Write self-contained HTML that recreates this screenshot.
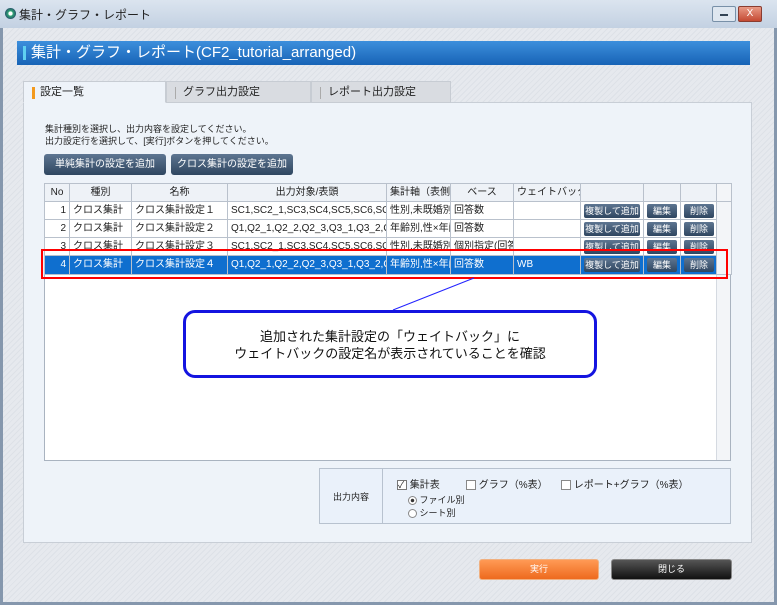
<!DOCTYPE html>
<html><head><meta charset="utf-8"><style>
*{margin:0;padding:0;box-sizing:border-box}
body{width:777px;height:605px;overflow:hidden;font-family:"Liberation Sans","Noto Sans CJK JP",sans-serif;font-size:10px;color:#222;position:relative;background:#8597ad}
.a{position:absolute}
.win{left:3px;top:0;width:771px;height:602px;background:#e4e8ee;background-image:repeating-linear-gradient(135deg,#e6e9ee 0 3px,#dde1e7 3px 4px)}
.tb{left:0;top:0;width:777px;height:28px;background:linear-gradient(#dbe4ef,#c3d1e2);font-size:12px}
.hdr{left:17px;top:41px;width:733px;height:24px;background:linear-gradient(#3d8fdc,#1763b6);color:#fff;font-size:15px;line-height:24px;padding-left:14px}
.tab{top:81px;height:22px;background:#d9dce1;border:1px solid #c7ccd3;font-size:11px;line-height:20px;padding-left:16px}
.panel{left:23px;top:102px;width:729px;height:441px;background:#eef3f9;border:1px solid #c8ced6}
.btn{background:linear-gradient(#5d7591,#2f4660);color:#fff;border-radius:3px;text-align:center}
table{border-collapse:collapse;table-layout:fixed}
td{border:1px solid #b9c1cc;height:18px;line-height:16px;padding:0 3px;white-space:nowrap;overflow:hidden;font-size:10px}
.sb{font-size:9px;line-height:14px;height:14px;margin:0 auto;border-radius:2px}
</style></head><body>
<div class="a win"></div>
<div class="a tb"><span class="a" style="left:5px;top:8px;width:11px;height:11px;border-radius:50%;background:radial-gradient(#fff 25%,#3a7 30%,#246 80%)"></span><span class="a" style="left:19px;top:6px">集計・グラフ・レポート</span>
<span class="a" style="left:712px;top:6px;width:24px;height:16px;border:1px solid #7890a8;background:#dfe7f0;border-radius:2px"></span><span class="a" style="left:720px;top:14px;width:8px;height:2px;background:#345"></span>
<span class="a" style="left:738px;top:6px;width:24px;height:16px;border:1px solid #8a3c30;background:linear-gradient(#e99a86,#c44a33);border-radius:2px;color:#fff;font-size:10px;text-align:center;line-height:14px">X</span></div>
<div class="a hdr"><span class="a" style="left:6px;top:5px;width:3px;height:14px;background:#5fd0f0"></span>集計・グラフ・レポート(CF2_tutorial_arranged)</div>
<div class="a panel"></div>
<div class="a tab" style="left:23px;width:143px;background:#eef3f9;border-bottom-color:#eef3f9"><span class="a" style="left:8px;top:5px;width:3px;height:12px;background:#f39a1e"></span>設定一覧</div>
<div class="a tab" style="left:166px;width:145px"><span class="a" style="left:8px;top:5px;width:1px;height:12px;background:#aaa"></span>グラフ出力設定</div>
<div class="a tab" style="left:311px;width:140px"><span class="a" style="left:8px;top:5px;width:1px;height:12px;background:#aaa"></span>レポート出力設定</div>
<div class="a" style="left:45px;top:123px;font-size:9px;line-height:12px">集計種別を選択し、出力内容を設定してください。<br>出力設定行を選択して、[実行]ボタンを押してください。</div>
<div class="a btn" style="left:44px;top:154px;width:122px;height:21px;line-height:21px">単純集計の設定を追加</div>
<div class="a btn" style="left:171px;top:154px;width:122px;height:21px;line-height:21px">クロス集計の設定を追加</div>
<div class="a" style="left:44px;top:183px;width:687px;height:278px;background:#fff;border:1px solid #a9b3c0"></div>
<div class="a" style="left:716px;top:201px;width:14px;height:259px;background:#f3f5f8;border-left:1px solid #d5dae1"></div>
<table class="a" style="left:44px;top:183px;width:687px">
<colgroup><col style="width:25px"><col style="width:62px"><col style="width:96px"><col style="width:159px"><col style="width:64px"><col style="width:63px"><col style="width:67px"><col style="width:63px"><col style="width:37px"><col style="width:36px"><col style="width:15px"></colgroup>
<tr style="background:#eef2f7;text-align:center"><td>No</td><td>種別</td><td>名称</td><td>出力対象/表頭</td><td style="text-align:left">集計軸（表側）</td><td>ベース</td><td style="text-align:left">ウェイトバック</td><td></td><td></td><td></td><td style="background:#f3f5f8"></td></tr>
<tr><td style="text-align:right">1</td><td>クロス集計</td><td>クロス集計設定１</td><td>SC1,SC2_1,SC3,SC4,SC5,SC6,SC7,SC</td><td>性別,未既婚別</td><td>回答数</td><td></td><td><div class="btn sb" style="width:56px">複製して追加</div></td><td><div class="btn sb" style="width:30px">編集</div></td><td><div class="btn sb" style="width:30px">削除</div></td><td rowspan="4" style="background:#f3f5f8;vertical-align:top"></td></tr>
<tr><td style="text-align:right">2</td><td>クロス集計</td><td>クロス集計設定２</td><td>Q1,Q2_1,Q2_2,Q2_3,Q3_1,Q3_2,Q3</td><td>年齢別,性×年齢</td><td>回答数</td><td></td><td><div class="btn sb" style="width:56px">複製して追加</div></td><td><div class="btn sb" style="width:30px">編集</div></td><td><div class="btn sb" style="width:30px">削除</div></td></tr>
<tr><td style="text-align:right;height:16px">3</td><td>クロス集計</td><td>クロス集計設定３</td><td>SC1,SC2_1,SC3,SC4,SC5,SC6,SC7,SC</td><td>性別,未既婚別</td><td>個別指定(回答</td><td></td><td><div class="btn sb" style="width:56px">複製して追加</div></td><td><div class="btn sb" style="width:30px">編集</div></td><td><div class="btn sb" style="width:30px">削除</div></td></tr>
<tr style="background:#0f6fcf;color:#fff"><td style="text-align:right;height:19px">4</td><td>クロス集計</td><td>クロス集計設定４</td><td>Q1,Q2_1,Q2_2,Q2_3,Q3_1,Q3_2,Q3</td><td>年齢別,性×年齢</td><td>回答数</td><td>WB</td><td><div class="btn sb" style="width:56px">複製して追加</div></td><td><div class="btn sb" style="width:30px">編集</div></td><td><div class="btn sb" style="width:30px">削除</div></td></tr>
</table>
<div class="a" style="left:41px;top:249px;width:687px;height:30px;border:2px solid #f00"></div>
<svg class="a" style="left:0;top:0" width="777" height="605"><line x1="474" y1="278" x2="393" y2="310" stroke="#22f" stroke-width="1"/></svg>
<div class="a" style="left:183px;top:310px;width:414px;height:68px;border:3px solid #1414e0;border-radius:12px;background:#fff;text-align:center;font-size:13px;line-height:17px;padding-top:15px;color:#111">追加された集計設定の「ウェイトバック」に<br>ウェイトバックの設定名が表示されていることを確認</div>
<div class="a" style="left:319px;top:468px;width:412px;height:56px;background:#eaf1fa;border:1px solid #b8c2cf"></div>
<div class="a" style="left:382px;top:468px;width:1px;height:56px;background:#b8c2cf"></div>
<div class="a" style="left:333px;top:490px;font-size:9px">出力内容</div>
<div class="a" style="left:397px;top:476px;font-size:10px"><span style="display:inline-block;width:10px;height:10px;border:1px solid #777;background:#fff;vertical-align:middle;font-size:9px;line-height:8px">✓</span> 集計表</div>
<div class="a" style="left:466px;top:476px;font-size:10px"><span style="display:inline-block;width:10px;height:10px;border:1px solid #888;background:#fff;vertical-align:middle"></span> グラフ（%表）</div>
<div class="a" style="left:561px;top:476px;font-size:10px"><span style="display:inline-block;width:10px;height:10px;border:1px solid #888;background:#fff;vertical-align:middle"></span> レポート+グラフ（%表）</div>
<div class="a" style="left:408px;top:494px;font-size:9px;line-height:13px"><span style="display:inline-block;width:9px;height:9px;border:1px solid #888;border-radius:50%;background:radial-gradient(#333 30%,#fff 40%);vertical-align:middle"></span> ファイル別<br><span style="display:inline-block;width:9px;height:9px;border:1px solid #888;border-radius:50%;background:#fff;vertical-align:middle"></span> シート別</div>
<div class="a" style="left:479px;top:559px;width:120px;height:21px;background:linear-gradient(#ff9a55,#ee6a1e);border:1px solid #f0b080;border-radius:3px;color:#fff;text-align:center;line-height:19px;font-size:9px">実行</div>
<div class="a" style="left:611px;top:559px;width:121px;height:21px;background:linear-gradient(#555,#111);border:1px solid #888;border-radius:3px;color:#fff;text-align:center;line-height:19px;font-size:9px">閉じる</div>
</body></html>
